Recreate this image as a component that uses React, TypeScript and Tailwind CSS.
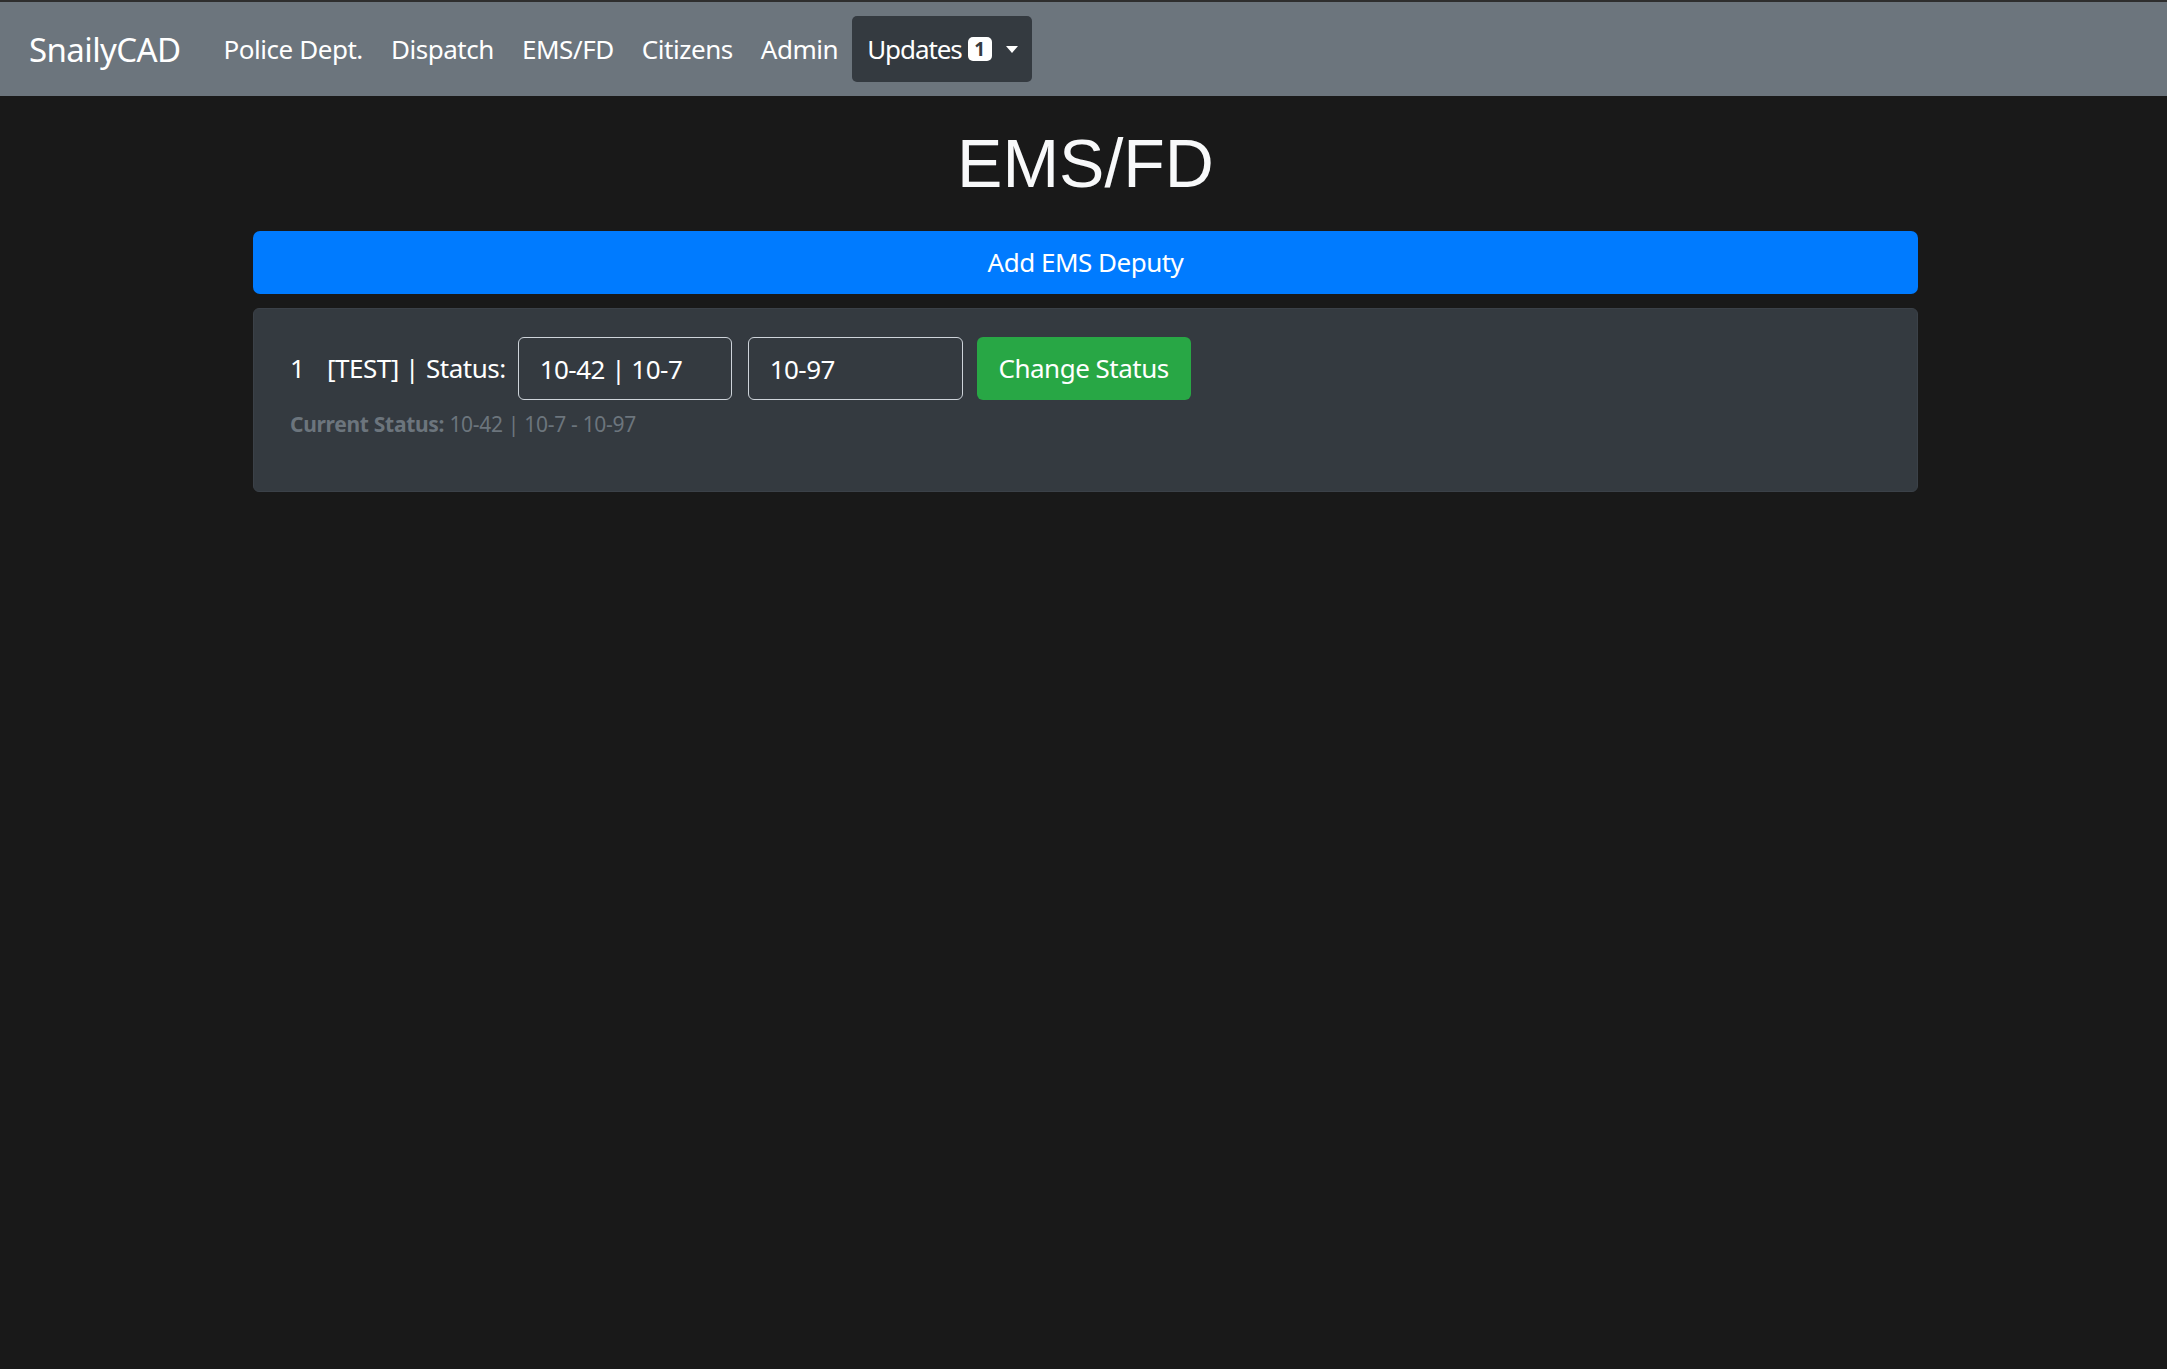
const navLinks = ["Police Dept.", "Dispatch", "EMS/FD", "Citizens", "Admin"];

function Navbar() {
  return (
    <nav className="flex h-[94px] items-center bg-[#6c757d] pl-[29px] text-white">
      <a className="mr-[29px] text-[33px] leading-none tracking-[-0.6px]">SnailyCAD</a>
      {navLinks.map((link) => (
        <a key={link} className="px-[14px] text-[26px] leading-none tracking-[-0.45px]">
          {link}
        </a>
      ))}
      <button className="flex h-[66px] items-center rounded-[5px] bg-[#343a40] pl-[15px] pr-[14px] text-[26px] leading-none text-white">
        <span className="tracking-[-1.1px]">Updates</span>
        <span className="ml-[6px] flex h-[24px] w-[24px] items-center justify-center rounded-[5px] bg-white text-[19px] font-bold text-[#343a40]">
          1
        </span>
        <span className="ml-[14px] h-0 w-0 border-x-[6px] border-t-[7px] border-x-transparent border-t-white"></span>
      </button>
    </nav>
  );
}

function StatusCard() {
  return (
    <div className="mt-[14px] rounded-[6px] border border-[#3b4148] bg-[#343a40] pl-[36px] pt-[28px] pb-[51px]">
      <div className="flex items-center text-[26px] tracking-[-0.5px] text-white">
        <span className="w-[37px]">1</span>
        <span className="w-[99px]">[TEST] |</span>
        <span>Status:</span>
        <input
          readOnly
          value="10-42 | 10-7"
          className="ml-[12px] h-[63px] w-[214px] rounded-[6px] border border-[#ced4da] bg-[#343a40] px-[21px] text-[26px] tracking-[-0.5px] text-white outline-none"
        />
        <input
          readOnly
          value="10-97"
          className="ml-[16px] h-[63px] w-[215px] rounded-[6px] border border-[#ced4da] bg-[#343a40] px-[21px] text-[26px] tracking-[-0.5px] text-white outline-none"
        />
        <button className="ml-[14px] h-[63px] w-[214px] rounded-[6px] bg-[#28a745] text-[26px] tracking-[-0.5px] text-white">
          Change Status
        </button>
      </div>
      <p className="mt-[8px] text-[21px] leading-[32px] tracking-[-0.3px] text-[#6c757d]">
        <span className="font-bold">Current Status:</span> 10-42 | 10-7 - 10-97
      </p>
    </div>
  );
}

export default function App() {
  return (
    <div
      className="min-h-screen border-t-2 border-[#2e2e2e] bg-[#191919]"
      style={{ fontFamily: '"Noto Sans", "Open Sans", sans-serif' }}
    >
      <Navbar />
      <main className="ml-[253px] w-[1665px]">
        <h1
          className="mt-[25px] text-center text-[68px] leading-[84px] text-[#f8f9fa]"
          style={{ fontFamily: '"Liberation Sans", Arial, sans-serif' }}
        >
          EMS/FD
        </h1>
        <button className="mt-[26px] flex h-[63px] w-full items-center justify-center rounded-[7px] bg-[#007bff] text-[26px] tracking-[-0.5px] text-white">
          Add EMS Deputy
        </button>
        <StatusCard />
      </main>
    </div>
  );
}
